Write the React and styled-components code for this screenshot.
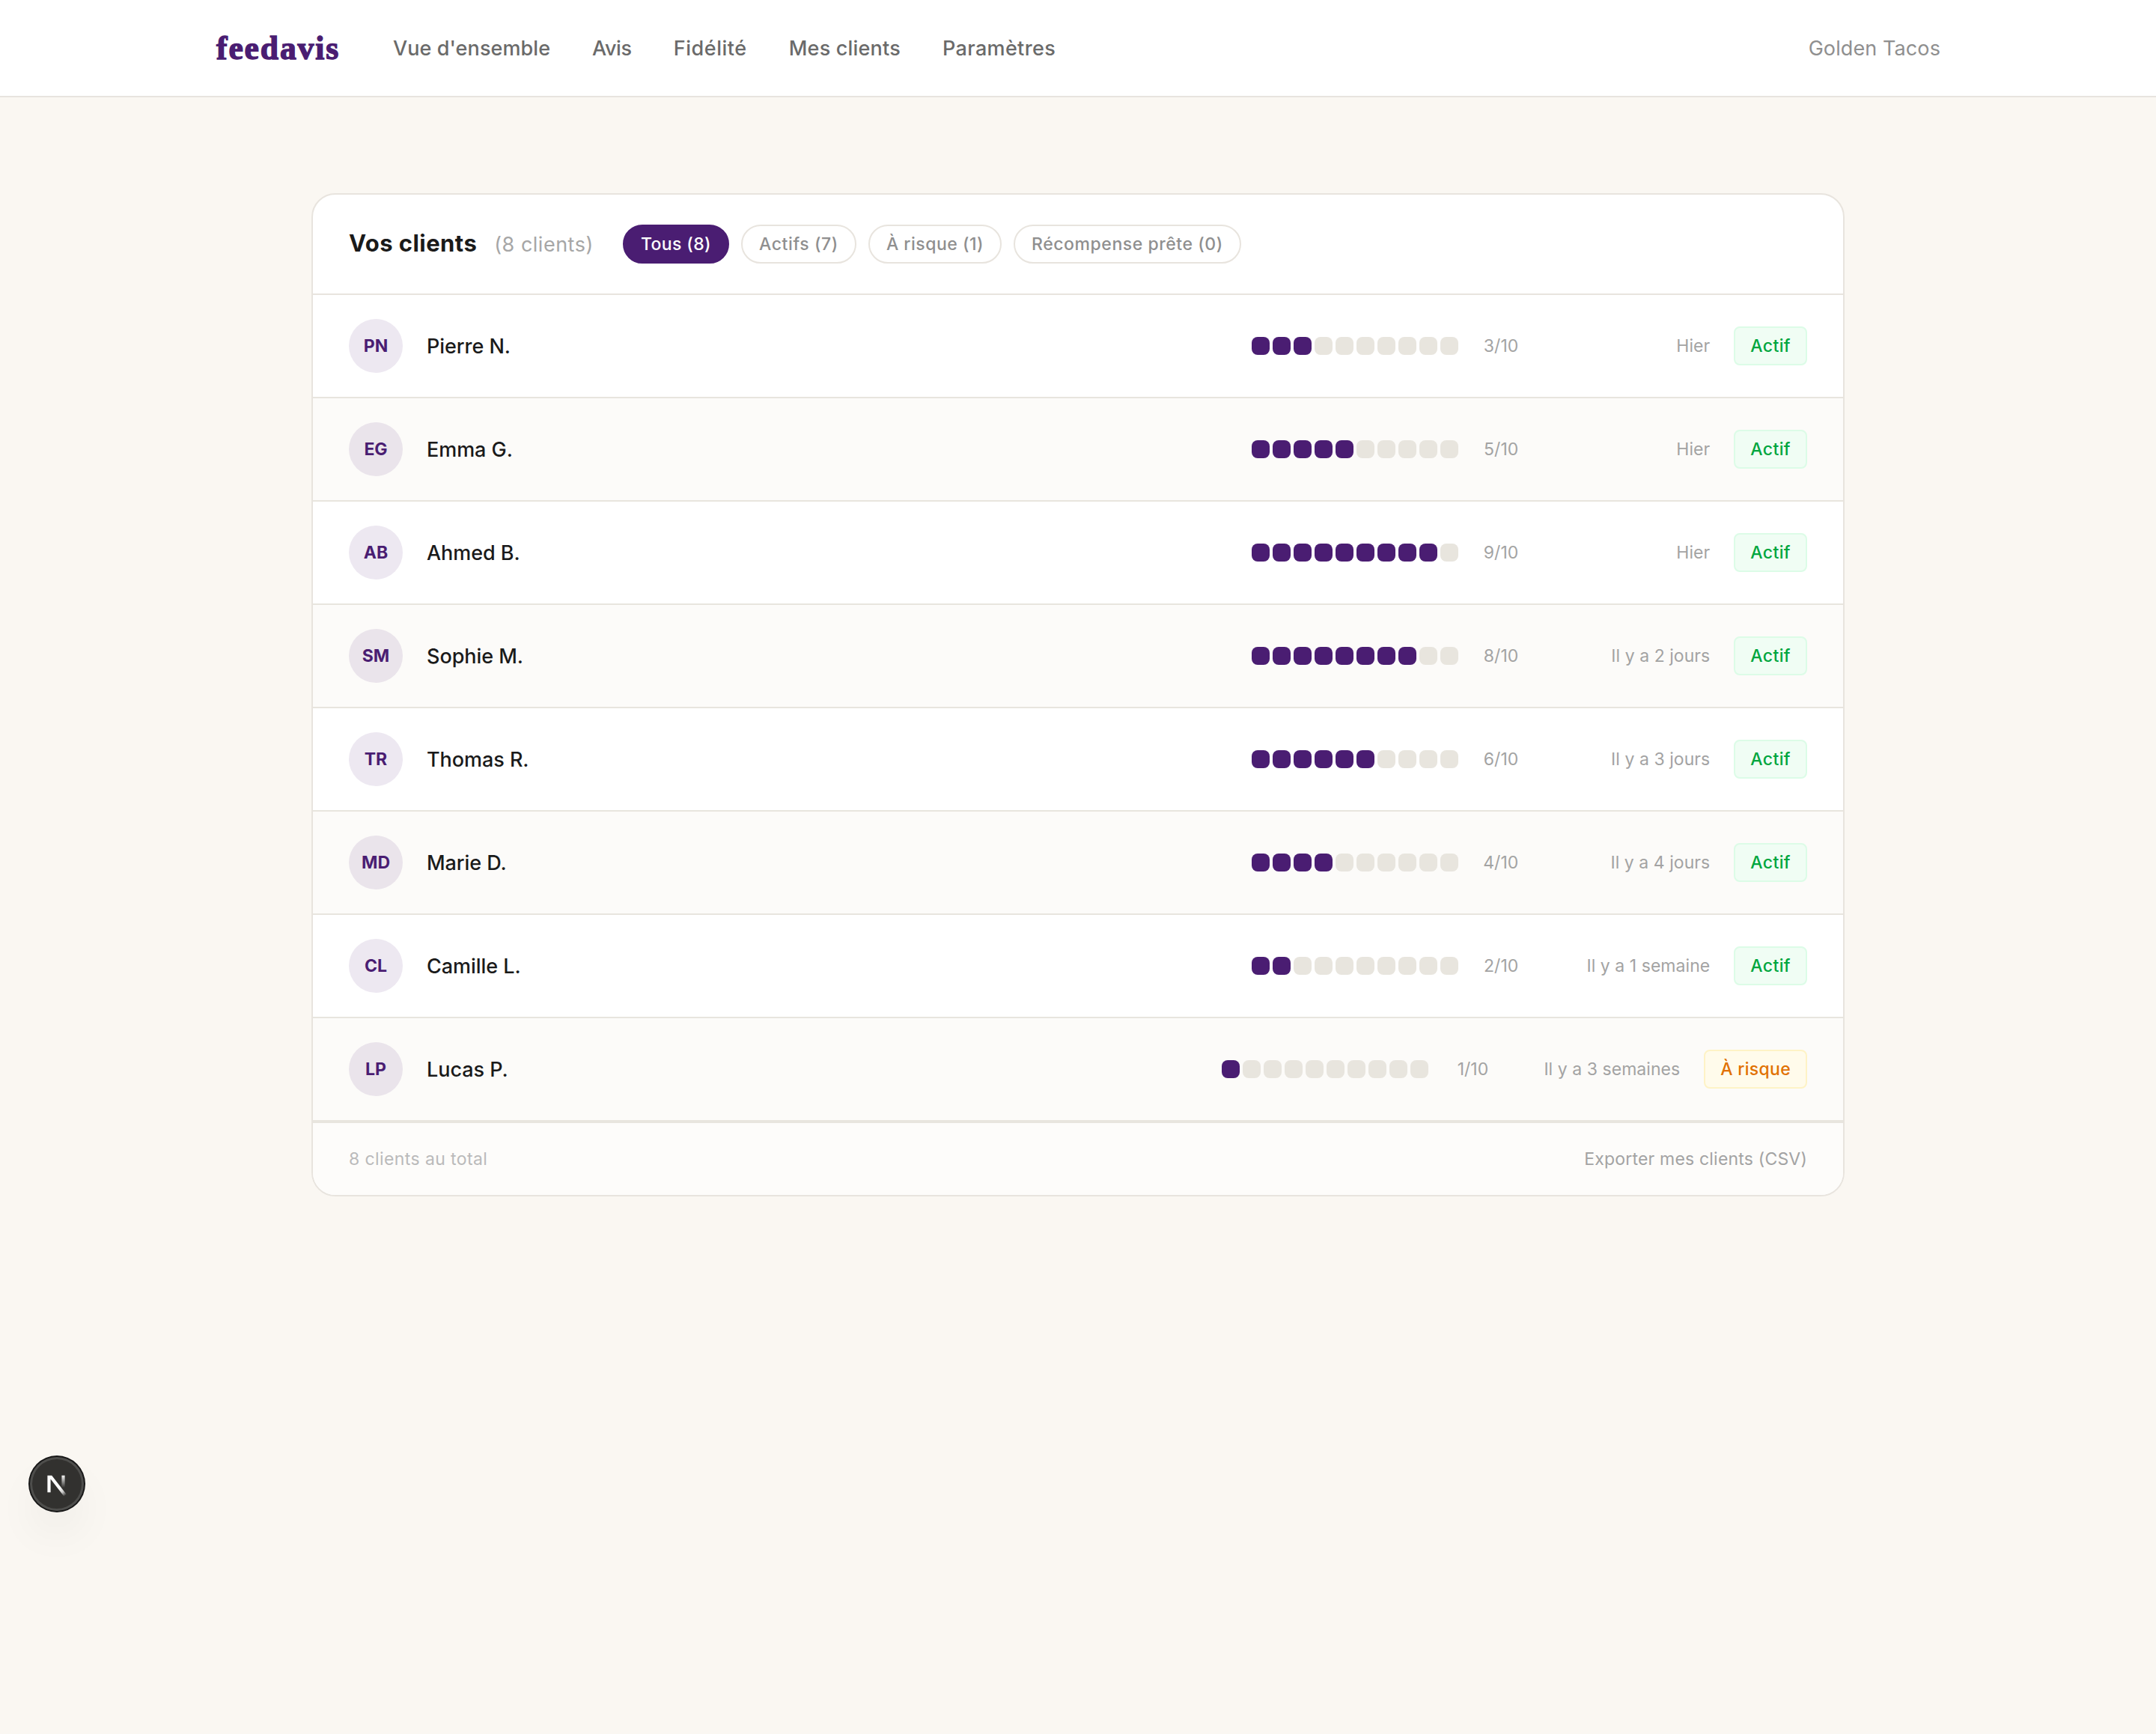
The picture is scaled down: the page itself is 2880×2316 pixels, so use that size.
import React, { useState } from "react";
import styled, { createGlobalStyle } from "styled-components";

const links = [
  { label: "Vue d'ensemble", track: 0.08 },
  { label: "Avis", track: -0.4 },
  { label: "Fidélité", track: 0.55 },
  { label: "Mes clients", track: 0.2 },
  { label: "Paramètres", track: 0.35 },
];

const filters = [
  { id: "all", label: "Tous", track: 0.38 },
  { id: "active", label: "Actifs", track: 0.6 },
  { id: "risk", label: "À risque", track: 0.5 },
  { id: "reward", label: "Récompense prête", track: 0.56 },
];

const clients = [
  { initials: "PN", name: "Pierre N.", points: 3, last: "Hier", status: "active" },
  { initials: "EG", name: "Emma G.", points: 5, last: "Hier", status: "active" },
  { initials: "AB", name: "Ahmed B.", points: 9, last: "Hier", status: "active" },
  { initials: "SM", name: "Sophie M.", points: 8, last: "Il y a 2 jours", status: "active" },
  { initials: "TR", name: "Thomas R.", points: 6, last: "Il y a 3 jours", status: "active" },
  { initials: "MD", name: "Marie D.", points: 4, last: "Il y a 4 jours", status: "active" },
  { initials: "CL", name: "Camille L.", points: 2, last: "Il y a 1 semaine", status: "active" },
  { initials: "LP", name: "Lucas P.", points: 1, last: "Il y a 3 semaines", status: "risk" },
];

const GOAL = 10;

const matches = (client, filter) => {
  if (filter === "all") return true;
  if (filter === "reward") return client.points >= GOAL;
  return client.status === filter;
};

const Stamps = ({ points }) => (
  <StampList>
    {Array.from({ length: GOAL }, (_, i) => (
      <Stamp key={i} $filled={i < points} />
    ))}
  </StampList>
);

const ClientRow = ({ client }) => (
  <Row>
    <Avatar>{client.initials}</Avatar>
    <Name>{client.name}</Name>
    <Stamps points={client.points} />
    <Points>
      {client.points}/{GOAL}
    </Points>
    <LastVisit>{client.last}</LastVisit>
    <Badge $risk={client.status === "risk"}>
      {client.status === "risk" ? "À risque" : "Actif"}
    </Badge>
  </Row>
);

const NextMark = () => (
  <svg width="72" height="72" viewBox="0 0 72 72" fill="none">
    <defs>
      <linearGradient id="diagonal" x1="39" y1="42" x2="47" y2="52" gradientUnits="userSpaceOnUse">
        <stop stopColor="#fff" />
        <stop offset="0.5" stopColor="#fff" stopOpacity="0.75" />
        <stop offset="1" stopColor="#fff" stopOpacity="0" />
      </linearGradient>
      <linearGradient id="stem" x1="44.5" y1="24" x2="44.5" y2="41" gradientUnits="userSpaceOnUse">
        <stop stopColor="#fff" />
        <stop offset="1" stopColor="#fff" stopOpacity="0" />
      </linearGradient>
    </defs>
    <path
      d="M23.4 24.7H29.2L48.6 49.8L45.4 52.4L27.6 29.6V47.2H23.4Z"
      fill="url(#diagonal)"
    />
    <path d="M42.4 24.7H46.6V41H42.4Z" fill="url(#stem)" />
  </svg>
);

export default function App() {
  const [filter, setFilter] = useState("all");
  const visible = clients.filter((client) => matches(client, filter));

  return (
    <>
      <GlobalStyle />
      <TopBar>
        <TopBarInner>
          <Logo>feedavis</Logo>
          <Nav>
            {links.map((link) => (
              <NavLink key={link.label} $track={link.track}>
                {link.label}
              </NavLink>
            ))}
          </Nav>
          <Shop>Golden Tacos</Shop>
        </TopBarInner>
      </TopBar>

      <Main>
        <Card>
          <CardHeader>
            <Heading>
              <Title>Vos clients</Title>
              <Total>({clients.length} clients)</Total>
            </Heading>
            <Filters>
              {filters.map((f) => (
                <Pill
                  key={f.id}
                  $active={f.id === filter}
                  $track={f.track}
                  onClick={() => setFilter(f.id)}
                >
                  {f.label} ({clients.filter((client) => matches(client, f.id)).length})
                </Pill>
              ))}
            </Filters>
          </CardHeader>
          {visible.map((client) => (
            <ClientRow key={client.name} client={client} />
          ))}
          <CardFooter>
            <FooterText>{clients.length} clients au total</FooterText>
            <ExportButton>Exporter mes clients (CSV)</ExportButton>
          </CardFooter>
        </Card>
      </Main>

      <DevBadge>
        <NextMark />
      </DevBadge>
    </>
  );
}

const GlobalStyle = createGlobalStyle`
  * {
    box-sizing: border-box;
  }
  body {
    margin: 0;
    min-height: 100vh;
    background: #faf7f2;
    color: #1a1a1a;
    font-family: Inter, "Liberation Sans", sans-serif;
  }
  button {
    font-family: inherit;
    cursor: pointer;
  }
`;

const TopBar = styled.header`
  background: #fff;
  border-bottom: 2px solid #e8e4df;
`;

const TopBarInner = styled.div`
  display: flex;
  align-items: center;
  width: 2304px;
  height: 128px;
  margin: 0 auto;
`;

const Logo = styled.a`
  width: 237px;
  padding-left: 1px;
  color: #4a1d72;
  font-family: "Liberation Serif", serif;
  font-size: 43.5px;
  font-weight: 700;
  letter-spacing: 1.9px;
  -webkit-text-stroke: 1.4px #4a1d72;
`;

const Nav = styled.nav`
  display: flex;
  gap: 56px;
`;

const NavLink = styled.a`
  color: #6a6a6a;
  font-size: 27px;
  font-weight: 500;
  letter-spacing: ${(p) => p.$track}px;
  white-space: nowrap;
`;

const Shop = styled.span`
  margin-left: auto;
  color: #8f8f8f;
  font-size: 27px;
  letter-spacing: 0.1px;
`;

const Main = styled.main`
  width: 2048px;
  margin: 0 auto;
  padding-top: 128px;
`;

const Card = styled.section`
  overflow: hidden;
  background: #fff;
  border: 2px solid #e8e4de;
  border-radius: 32px;
`;

const CardHeader = styled.div`
  display: flex;
  align-items: center;
  padding: 40px 48px;
  border-bottom: 2px solid #e8e4de;
`;

const Heading = styled.div`
  display: flex;
  align-items: baseline;
  gap: 23px;
  width: 366px;
  height: 40px;
  line-height: 38px;
  white-space: nowrap;
`;

const Title = styled.h2`
  margin: 0;
  font-size: 31px;
  font-weight: 700;
  letter-spacing: 0.45px;
`;

const Total = styled.span`
  color: #a6a6a6;
  font-size: 27px;
  letter-spacing: 0.5px;
`;

const Filters = styled.div`
  display: flex;
  gap: 16px;
`;

const Pill = styled.button`
  height: 52px;
  padding: 0 22px;
  background: ${(p) => (p.$active ? "#4a1d72" : "#fff")};
  border: 2px solid ${(p) => (p.$active ? "#4a1d72" : "#e8e4de")};
  border-radius: 26px;
  color: ${(p) => (p.$active ? "#fff" : "#8f8f8f")};
  font-size: 23px;
  font-weight: 500;
  letter-spacing: ${(p) => p.$track}px;
  white-space: nowrap;
`;

const Row = styled.div`
  display: flex;
  align-items: center;
  padding: 32px 48px;
  border-bottom: 2px solid #e8e5de;

  &:nth-child(odd) {
    background: #fcfbf9;
  }
`;

const Avatar = styled.div`
  display: flex;
  align-items: center;
  justify-content: center;
  width: 72px;
  height: 72px;
  margin-right: 32px;
  background: rgba(74, 29, 114, 0.1);
  border-radius: 50%;
  color: #4a1d72;
  font-size: 23px;
  font-weight: 700;
`;

const Name = styled.span`
  flex: 1;
  font-size: 27px;
  font-weight: 500;
  letter-spacing: -0.05px;
`;

const StampList = styled.div`
  display: flex;
  gap: 4px;
`;

const Stamp = styled.span`
  width: 24px;
  height: 24px;
  background: ${(p) => (p.$filled ? "#4a1d72" : "#e8e5de")};
  border-radius: 8px;
`;

const Points = styled.span`
  width: 80px;
  color: #a3a3a3;
  font-size: 23px;
  text-align: right;
`;

const LastVisit = styled.span`
  width: 224px;
  margin: 0 32px;
  color: #a3a3a3;
  font-size: 23px;
  letter-spacing: 0.05px;
  text-align: right;
`;

const Badge = styled.span`
  height: 52px;
  padding: 0 20px;
  background: ${(p) => (p.$risk ? "#fffbeb" : "#f0fdf4")};
  border: 2px solid ${(p) => (p.$risk ? "#fef3c6" : "#dcfce7")};
  border-radius: 8px;
  color: ${(p) => (p.$risk ? "#e17100" : "#00a63e")};
  font-size: 23px;
  font-weight: 500;
  letter-spacing: ${(p) => (p.$risk ? 0.3 : 0.4)}px;
  line-height: 48px;
`;

const CardFooter = styled.div`
  display: flex;
  align-items: center;
  justify-content: space-between;
  height: 98px;
  padding: 0 48px;
  background: #fdfcfa;
  border-top: 2px solid #e8e5de;
`;

const FooterText = styled.span`
  color: #bababa;
  font-size: 23px;
  letter-spacing: 0.4px;
`;

const ExportButton = styled.button`
  padding: 0;
  background: none;
  border: none;
  color: #a3a3a3;
  font-size: 23px;
  letter-spacing: 0.2px;
`;

const DevBadge = styled.div`
  position: fixed;
  left: 40px;
  bottom: 298px;
  width: 72px;
  height: 72px;
  background: #32312f;
  border-radius: 50%;
  box-shadow: 0 0 0 2px #171717, inset 0 0 0 3px rgba(255, 255, 255, 0.14),
    0 32px 64px -16px rgba(0, 0, 0, 0.14);
`;
